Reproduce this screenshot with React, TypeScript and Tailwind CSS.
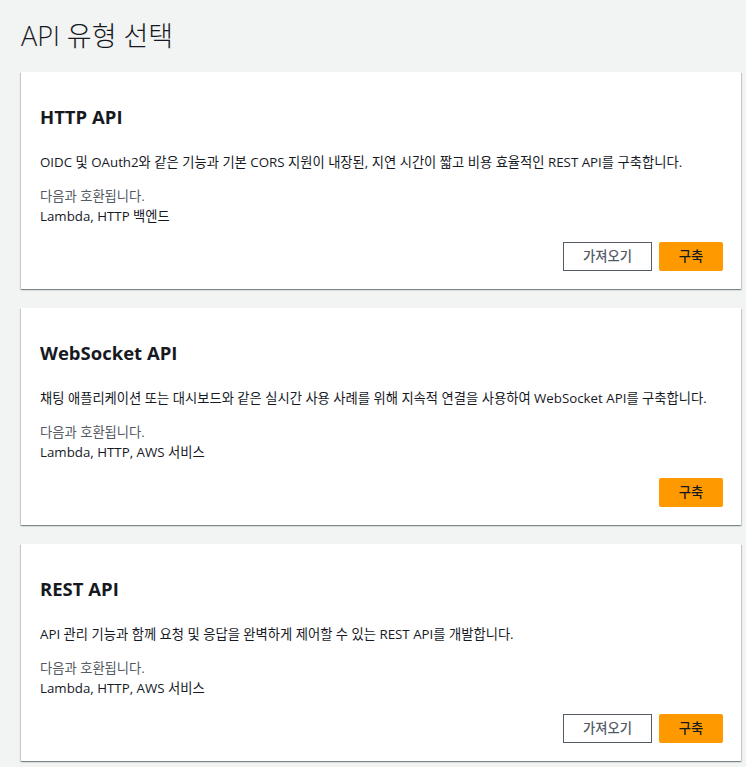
const font = "font-['Open_Sans','Noto_Sans_CJK_KR',sans-serif]";

type Api = {
  title: string;
  desc: string;
  compat: string;
  canImport: boolean;
};

const apis: Api[] = [
  {
    title: "HTTP API",
    desc: "OIDC 및 OAuth2와 같은 기능과 기본 CORS 지원이 내장된, 지연 시간이 짧고 비용 효율적인 REST API를 구축합니다.",
    compat: "Lambda, HTTP 백엔드",
    canImport: true,
  },
  {
    title: "WebSocket API",
    desc: "채팅 애플리케이션 또는 대시보드와 같은 실시간 사용 사례를 위해 지속적 연결을 사용하여 WebSocket API를 구축합니다.",
    compat: "Lambda, HTTP, AWS 서비스",
    canImport: false,
  },
  {
    title: "REST API",
    desc: "API 관리 기능과 함께 요청 및 응답을 완벽하게 제어할 수 있는 REST API를 개발합니다.",
    compat: "Lambda, HTTP, AWS 서비스",
    canImport: true,
  },
];

function ApiCard({ api }: { api: Api }) {
  return (
    <section className="w-[720px] h-[217px] bg-white flex flex-col pl-[19px] pr-[18px] pt-[34px] pb-[18px] shadow-[0_1px_1px_0_rgba(0,28,36,0.3),1px_1px_1px_0_rgba(0,28,36,0.15),-1px_1px_1px_0_rgba(0,28,36,0.15)]">
      <h2 className="text-[18.5px] leading-[22px] font-bold text-[#16191f]">{api.title}</h2>
      <p className="mt-[24px] text-[13.3px] leading-[20px] text-[#16191f]">{api.desc}</p>
      <p className="mt-[14px] text-[13.3px] leading-[20px] text-[#545b64]">다음과 호환됩니다.</p>
      <p className="text-[13.3px] leading-[20px] text-[#16191f]">{api.compat}</p>
      <div className="mt-auto flex justify-end gap-[7px]">
        {api.canImport && (
          <button className="w-[89px] h-[29px] border border-[#545b64] bg-white text-[13.3px] text-[#545b64] font-medium">
            가져오기
          </button>
        )}
        <button className="w-[64px] h-[29px] rounded-[2px] bg-[#ff9900] text-[13.3px] text-[#16191f] font-medium">
          구축
        </button>
      </div>
    </section>
  );
}

export default function App() {
  return (
    <main className={`${font} min-h-[767px] bg-[#f2f3f3] pl-[21px] pt-[18px]`}>
      <h1 className="text-[27px] leading-[36px] font-light text-[#16191f]">API 유형 선택</h1>
      <div className="mt-[18px] flex flex-col gap-[19px]">
        {apis.map((a) => (
          <ApiCard key={a.title} api={a} />
        ))}
      </div>
    </main>
  );
}
